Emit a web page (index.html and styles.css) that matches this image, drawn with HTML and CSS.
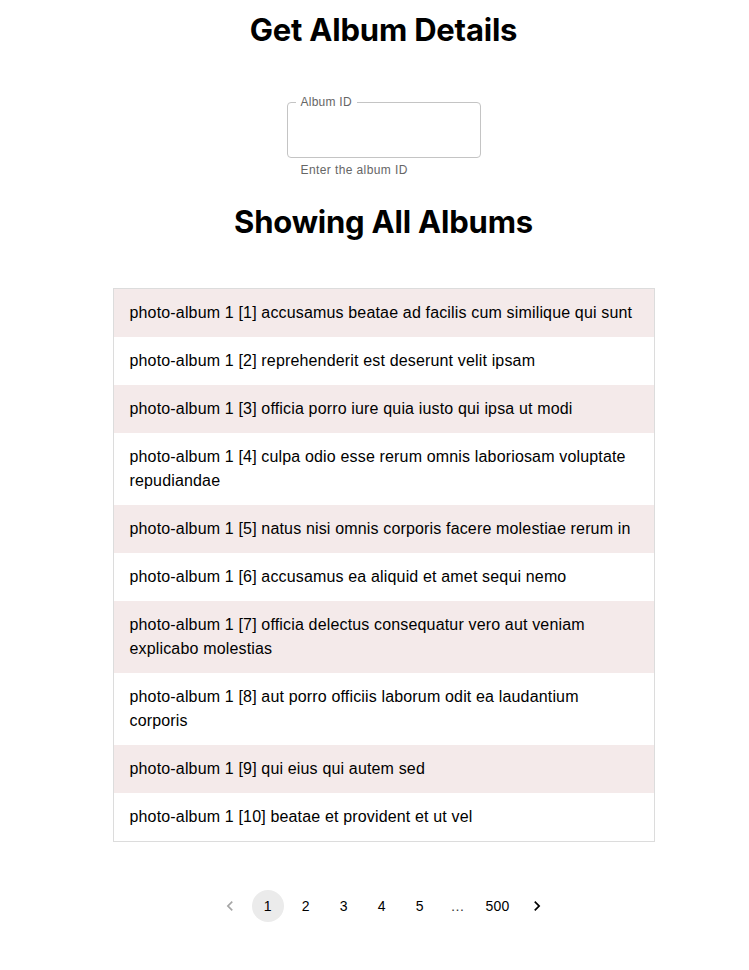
FILE: index.html
```html
<!DOCTYPE html>
<html lang="en">
<head>
<meta charset="utf-8">
<title>Albums</title>
<link rel="stylesheet" href="styles.css">
</head>
<body>
<main class="page">
  <h1 class="title">Get Album Details</h1>
  <div class="field">
    <fieldset class="field-box">
      <legend class="field-label">Album ID</legend>
      <input class="field-input" type="text" aria-label="Album ID">
    </fieldset>
    <p class="field-help">Enter the album ID</p>
  </div>
  <h1 class="title title-second">Showing All Albums</h1>
  <ul class="albums">
    <li class="album">photo-album 1 [1] accusamus beatae ad facilis cum similique qui sunt</li>
    <li class="album">photo-album 1 [2] reprehenderit est deserunt velit ipsam</li>
    <li class="album">photo-album 1 [3] officia porro iure quia iusto qui ipsa ut modi</li>
    <li class="album">photo-album 1 [4] culpa odio esse rerum omnis laboriosam voluptate repudiandae</li>
    <li class="album">photo-album 1 [5] natus nisi omnis corporis facere molestiae rerum in</li>
    <li class="album">photo-album 1 [6] accusamus ea aliquid et amet sequi nemo</li>
    <li class="album">photo-album 1 [7] officia delectus consequatur vero aut veniam explicabo molestias</li>
    <li class="album">photo-album 1 [8] aut porro officiis laborum odit ea laudantium corporis</li>
    <li class="album">photo-album 1 [9] qui eius qui autem sed</li>
    <li class="album">photo-album 1 [10] beatae et provident et ut vel</li>
  </ul>
  <nav class="pager">
    <button class="page-btn page-arrow is-disabled" aria-label="previous">
      <svg viewBox="0 0 24 24" width="20" height="20"><path d="M15.41 7.41 14 6l-6 6 6 6 1.41-1.41L10.83 12z"/></svg>
    </button>
    <button class="page-btn is-current">1</button>
    <button class="page-btn">2</button>
    <button class="page-btn">3</button>
    <button class="page-btn">4</button>
    <button class="page-btn">5</button>
    <span class="page-btn page-ellipsis">…</span>
    <button class="page-btn">500</button>
    <button class="page-btn page-arrow" aria-label="next">
      <svg viewBox="0 0 24 24" width="20" height="20"><path d="M10 6 8.59 7.41 13.17 12l-4.58 4.59L10 18l6-6z"/></svg>
    </button>
  </nav>
</main>
</body>
</html>
```
FILE: styles.css
```css
* { box-sizing: border-box; }

body {
  margin: 0;
  background: #ffffff;
  color: #000000;
  font-family: "Liberation Sans", Arial, sans-serif;
}

.page {
  display: flex;
  flex-direction: column;
  align-items: center;
  padding-top: 11px;
  padding-left: 18px;
}

.title {
  margin: 0;
  font-family: Inter, "Liberation Sans", sans-serif;
  font-weight: 700;
  font-size: 31px;
  line-height: 38px;
  letter-spacing: -0.2px;
}

.title-second {
  margin-top: 25px;
}

.field {
  margin-top: 46px;
  width: 194px;
}

.field-box {
  margin: 0;
  padding: 0 8px;
  height: 63px;
  border: 1px solid #c4c4c4;
  border-radius: 4px;
  display: block;
}

.field-label {
  padding: 0 5px;
  margin-left: 0;
  font-size: 12px;
  line-height: 14px;
  letter-spacing: 0.25px;
  color: #666666;
}

.field-input {
  display: block;
  width: 100%;
  border: 0;
  outline: 0;
  background: transparent;
  height: 40px;
  font-size: 16px;
  font-family: inherit;
}

.field-help {
  margin: 4px 14px 0;
  font-size: 12px;
  line-height: 16px;
  letter-spacing: 0.4px;
  color: #666666;
}

.albums {
  list-style: none;
  margin: 47px 0 0;
  padding: 0;
  width: 542px;
  border: 1px solid #dcdcdc;
}

.album {
  padding: 12px 16px;
  font-size: 16px;
  line-height: 24px;
  letter-spacing: 0.16px;
  background: #ffffff;
}

.album:nth-child(odd) {
  background: #f4eaea;
}

.pager {
  display: flex;
  align-items: center;
  gap: 6px;
  margin-top: 48px;
}

.page-btn {
  min-width: 32px;
  height: 32px;
  padding: 0 6px;
  border: 0;
  border-radius: 16px;
  background: transparent;
  font-family: "Liberation Sans", Arial, sans-serif;
  font-size: 14px;
  letter-spacing: 0.15px;
  color: #000000;
  display: flex;
  align-items: center;
  justify-content: center;
}

.page-btn.is-current {
  background: #ebebeb;
}

.page-arrow svg {
  fill: #000000;
}

.page-arrow.is-disabled svg {
  fill: #a6a6a6;
}

.page-ellipsis {
  color: #333333;
}
```
